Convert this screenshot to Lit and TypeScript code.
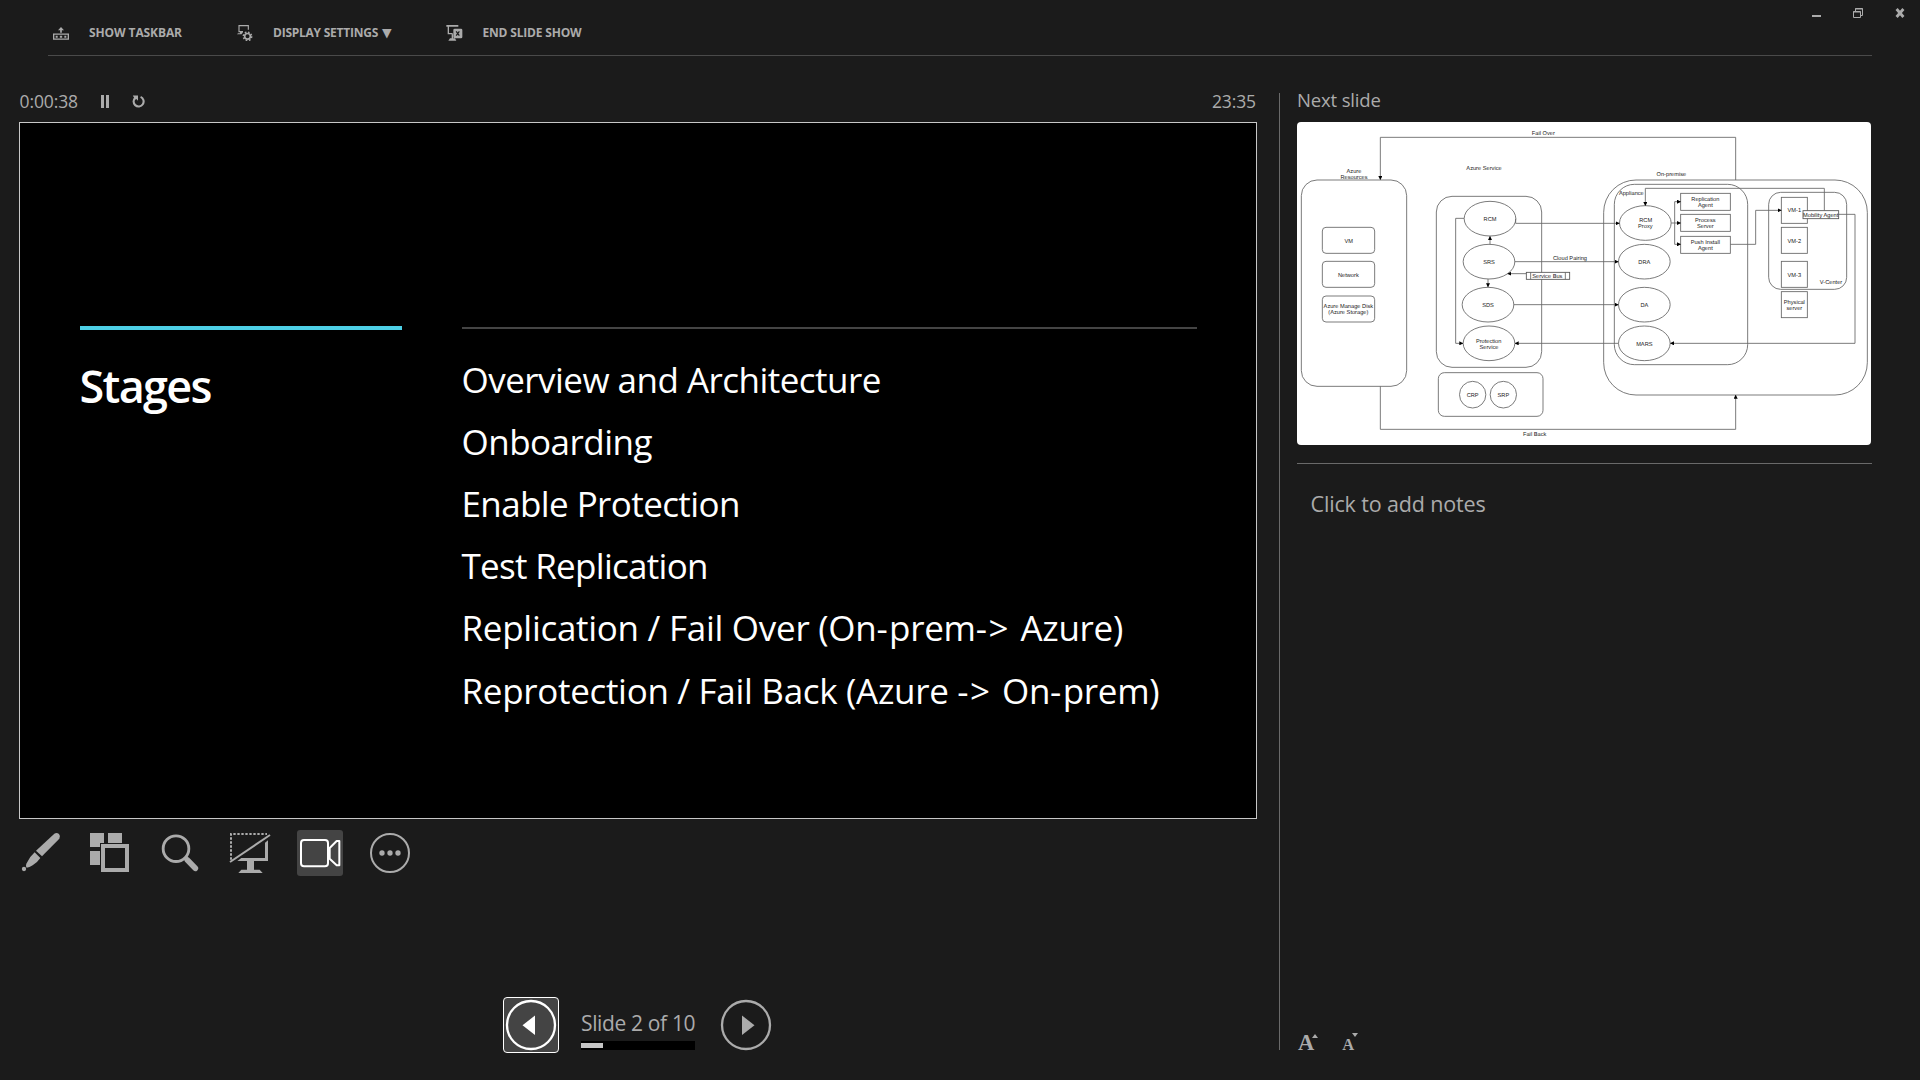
import { LitElement, html, svg, css } from "lit";
import { customElement, property } from "lit/decorators.js";
import { styleMap } from "lit/directives/style-map.js";

const AGENDA: { text: string; spacing: number }[] = [
  { text: "Overview and Architecture", spacing: -0.53 },
  { text: "Onboarding", spacing: -0.52 },
  { text: "Enable Protection", spacing: -0.6 },
  { text: "Test Replication", spacing: -0.7 },
  { text: "Replication / Fail Over (On-prem-> Azure)", spacing: -0.28 },
  { text: "Reprotection / Fail Back (Azure -> On-prem)", spacing: -0.31 },
];

/* Architecture diagram shown on the upcoming slide. */
@customElement("slide-diagram")
class SlideDiagram extends LitElement {
  static styles = css`
    :host { display: block; background: #fff; border-radius: 4px; overflow: hidden; }
    svg { display: block; width: 100%; height: 100%; }
    .shape { fill: none; stroke: #666; stroke-width: 2.6; }
    .solid { fill: #fff; stroke: #555; stroke-width: 2.6; }
    .wire { fill: none; stroke: #666; stroke-width: 2.6; }
    .head { fill: #000; }
    .label {
      font-family: "Liberation Sans", Arial, sans-serif;
      font-size: 17px;
      fill: #222;
      text-anchor: middle;
      text-rendering: geometricPrecision;
    }
  `;

  private box(x: number, y: number, w: number, h: number, r = 0) {
    return svg`<rect class="shape" x=${x} y=${y} width=${w} height=${h} rx=${r}></rect>`;
  }
  private oval(x: number, y: number, rx = 77.5, ry = 52) {
    return svg`<ellipse class="shape" cx=${x} cy=${y} rx=${rx} ry=${ry}></ellipse>`;
  }
  private label(x: number, y: number, text: string) {
    return svg`<text class="label" x=${x} y=${y + 6}>${text}</text>`;
  }
  private wire(d: string) {
    return svg`<path class="wire" marker-end="url(#head)" d=${d}></path>`;
  }

  render() {
    return html`<svg viewBox="0 0 1722 969">
      <defs>
        <marker id="head" viewBox="0 0 12 12" refX="11" refY="6" markerWidth="12" markerHeight="12"
          markerUnits="userSpaceOnUse" orient="auto">
          <path class="head" d="M0 0L12 6L0 12Z"></path>
        </marker>
      </defs>
      ${this.box(13, 174, 316, 619, 47)}
      ${this.box(76, 316, 157, 78, 11)} ${this.box(76, 418, 157, 78, 11)} ${this.box(76, 522, 157, 78, 11)}
      ${this.box(418, 223, 316, 513, 47)} ${this.box(424, 752, 314, 131, 18)}
      ${this.box(920, 174, 791, 645, 97)} ${this.box(952, 187, 400, 541, 60)}
      ${this.box(1415, 211, 234, 291, 36)}
      ${this.box(1151, 214, 149, 51)} ${this.box(1151, 277, 149, 51)} ${this.box(1151, 343, 149, 51)}
      ${this.box(1453, 226, 78, 78)} ${this.box(1453, 316, 78, 78)}
      ${this.box(1453, 418, 78, 78)} ${this.box(1453, 509, 78, 78)}
      ${this.oval(579, 290)} ${this.oval(576, 419)} ${this.oval(573, 548)} ${this.oval(576, 664)}
      ${this.oval(527, 818, 39.5, 40)} ${this.oval(619, 818, 39.5, 40)}
      ${this.oval(1045, 303)} ${this.oval(1042, 419)} ${this.oval(1042, 548)} ${this.oval(1042, 664)}

      ${this.wire("M1316 174V46H250V173")}
      ${this.wire("M250 793V922H1316V819")}
      ${this.wire("M656 290V304H967")}
      ${this.wire("M653 419H964")}
      ${this.wire("M650 548H964")}
      ${this.wire("M964 664H654")}
      ${this.wire("M501 289H476V664H498")}
      ${this.wire("M579 367V343")}
      ${this.wire("M573 471V495")}
      ${this.wire("M688 455H632")}
      ${this.wire("M1123 303H1151")}
      ${this.wire("M1133 303V239H1151")}
      ${this.wire("M1133 303V367H1151")}
      ${this.wire("M1300 367H1376V265H1453")}
      ${this.wire("M1582 266V199H1045V251")}
      ${this.wire("M1625 277H1674V664H1120")}

      <rect class="solid" x="688" y="451" width="130" height="21"></rect>
      <path class="wire" d="M701 451V472M805 451V472"></path>
      <rect class="solid" x="1518" y="266" width="107" height="24"></rect>

      ${this.label(739, 34, "Fail Over")} ${this.label(561, 137, "Azure Service")}
      ${this.label(171, 147, "Azure")} ${this.label(171, 165, "Resources")}
      ${this.label(155, 356, "VM")} ${this.label(154, 458, "Network")}
      ${this.label(154, 553, "Azure Manage Disk")} ${this.label(154, 571, "(Azure Storage)")}
      ${this.label(579, 291, "RCM")} ${this.label(576, 420, "SRS")} ${this.label(573, 549, "SDS")}
      ${this.label(575, 656, "Protection")} ${this.label(576, 674, "Service")}
      ${this.label(527, 819, "CRP")} ${this.label(619, 819, "SRP")}
      ${this.label(819, 407, "Cloud Pairing")} ${this.label(751, 462, "Service Bus")}
      ${this.label(713, 935, "Fail Back")}
      ${this.label(1123, 156, "On-premise")} ${this.label(1003, 214, "Appliance")}
      ${this.label(1046, 295, "RCM")} ${this.label(1045, 313, "Proxy")}
      ${this.label(1042, 420, "DRA")} ${this.label(1042, 549, "DA")} ${this.label(1042, 665, "MARS")}
      ${this.label(1225, 231, "Replication")} ${this.label(1225, 248, "Agent")}
      ${this.label(1225, 295, "Process")} ${this.label(1225, 313, "Server")}
      ${this.label(1225, 360, "Push Install")} ${this.label(1225, 377, "Agent")}
      ${this.label(1492, 265, "VM-1")} ${this.label(1492, 356, "VM-2")} ${this.label(1492, 459, "VM-3")}
      ${this.label(1571, 278, "Mobility Agent")} ${this.label(1602, 479, "V-Center")}
      ${this.label(1492, 540, "Physical")} ${this.label(1492, 558, "server")}
    </svg>`;
  }
}

/* Full view of the slide being presented. */
@customElement("current-slide")
class CurrentSlide extends LitElement {
  static styles = css`
    :host {
      display: grid;
      grid-template-columns: 322px 735.5px;
      column-gap: 60px;
      align-content: start;
      box-sizing: border-box;
      padding: 203px 0 0 59.5px;
      background: #000;
      border: 1px solid #c8c8c8;
      color: #fff;
      font-family: "Open Sans", "Noto Sans", sans-serif;
    }
    .accent { height: 4px; background: #4dd0e6; }
    .rule { height: 2px; margin-top: 1px; background: #444; }
    .title {
      margin: 26px 0 0;
      font-size: 45px;
      font-weight: 650;
      line-height: 60px;
      letter-spacing: -1.7px;
    }
    .items { margin: 19.6px 0 0; padding: 0; list-style: none; }
    .item { font-size: 35px; line-height: 62.2px; white-space: nowrap; }
    .dash { letter-spacing: 1.4px; }
    .angle { letter-spacing: 3.2px; }
  `;

  /* Dashes and arrow heads are set wider than the letters around them. */
  private line(text: string) {
    return text.split(/([->])/).map((part) =>
      part === "-" ? html`<span class="dash">-</span>` : part === ">" ? html`<span class="angle">&gt;</span>` : part
    );
  }

  render() {
    return html`
      <section>
        <div class="accent"></div>
        <h1 class="title">Stages</h1>
      </section>
      <section>
        <div class="rule"></div>
        <ul class="items">
          ${AGENDA.map(
            (a) => html`<li class="item" style=${styleMap({ letterSpacing: `${a.spacing}px` })}>${this.line(a.text)}</li>`
          )}
        </ul>
      </section>
    `;
  }
}

const icons = {
  taskbar: html`<svg width="16" height="13" viewBox="0 0 48 39">
    <path fill="none" stroke="currentColor" stroke-width="4" d="M2 21.5H46V36.5H2Z"></path>
    <path fill="currentColor" d="M8 26.5H14V32H8ZM20.5 26.5H27.5V32H20.5ZM34 26.5H40V32H34Z"></path>
    <path fill="currentColor" d="M24 0L33 9.5H26.5V17H21.5V9.5H15Z"></path>
  </svg>`,
  display: html`<svg width="16" height="16" viewBox="0 0 48 48">
    <path fill="none" stroke="currentColor" stroke-width="3.4" d="M18 20H6V2H34V14"></path>
    <path fill="currentColor" d="M9 21H17V25H15L14 28H0L3 25H9Z"></path>
    <circle cx="31.5" cy="34" r="8.5" fill="none" stroke="currentColor" stroke-width="5"></circle>
    <circle cx="31.5" cy="34" r="12.6" fill="none" stroke="currentColor" stroke-width="4.4" stroke-dasharray="5 4.9"></circle>
  </svg>`,
  end: html`<svg width="17" height="16" viewBox="0 0 51 48">
    <path fill="currentColor" d="M1 0H37V5H1ZM5 5H9V24H20V28H5ZM17 28H21V40H17ZM12 40H27L31 47H7Z"></path>
    <rect x="22" y="11" width="27" height="29" rx="4" fill="currentColor"></rect>
    <path fill="none" stroke="#1b1b1b" stroke-width="3.6" d="M30.500 19L40 32M40 19L30.500 32"></path>
  </svg>`,
  pen: html`<svg viewBox="0 0 138 138" fill="currentColor">
    <path d="M57 62L112 11Q119 6 126 12Q132 19 127 26L75 79Z"></path>
    <path d="M53 67L70 84Q59 100 47 106Q37 113 29 113Q25 108 28 101Q37 81 53 67Z"></path>
    <circle cx="21" cy="117" r="6.500"></circle>
  </svg>`,
  grid: html`<svg viewBox="0 0 138 138" fill="currentColor">
    <path d="M9 9H51V39H39V51H9ZM63 9H105V39H63ZM9 63H39V105H9Z"></path>
    <rect x="48" y="48" width="72" height="72" fill="none" stroke="currentColor" stroke-width="12"></rect>
  </svg>`,
  zoom: html`<svg viewBox="0 0 138 138" fill="none" stroke="currentColor">
    <circle cx="57" cy="56" r="38.500" stroke-width="8.500"></circle>
    <path d="M84 83L89 88" stroke-width="12"></path>
    <path d="M91 90L115 115" stroke-width="17" stroke-linecap="round"></path>
  </svg>`,
  screen: html`<svg viewBox="0 0 138 138" fill="currentColor">
    <path fill="none" stroke="currentColor" stroke-width="6" stroke-dasharray="7 5" d="M12 89V12H120"></path>
    <path fill="none" stroke="currentColor" stroke-width="6" d="M9 96L129 15"></path>
    <path d="M114 38L123 31V93H31L43 84H114Z"></path>
    <path d="M60 93H81V119H98L107 129H34L43 119H60Z"></path>
  </svg>`,
  camera: html`<svg viewBox="0 0 138 138" fill="none" stroke="currentColor" stroke-width="6">
    <rect x="12" y="30" width="81" height="79" rx="9"></rect>
    <path stroke-linejoin="round" d="M98 54L119 33H127V106H119L98 86Z"></path>
  </svg>`,
  more: html`<svg viewBox="0 0 138 138" fill="currentColor">
    <circle cx="69" cy="69" r="57" fill="none" stroke="currentColor" stroke-width="6"></circle>
    <circle cx="45" cy="69" r="8"></circle><circle cx="69" cy="69" r="8"></circle><circle cx="93" cy="69" r="8"></circle>
  </svg>`,
};

@customElement("app-root")
class AppRoot extends LitElement {
  static styles = css`
    :host {
      display: block;
      width: 1920px;
      height: 1080px;
      overflow: hidden;
      background: #1b1b1b;
      color: #ababab;
      font-family: "Open Sans", "Noto Sans", sans-serif;
      font-size: 12px;
    }
    svg { display: block; flex: none; }
    .header {
      display: flex;
      box-sizing: border-box;
      height: 56px;
      margin: 0 48px;
      border-bottom: 1px solid #4a4a4a;
      justify-content: space-between;
      align-items: flex-start;
    }
    .commands { display: flex; padding: 22px 0 0 5px; height: 22px; align-items: center; }
    .command { display: flex; align-items: center; font-weight: 700; white-space: nowrap; line-height: 20px; }
    .show { width: 184px; gap: 20px; letter-spacing: -0.1px; }
    .display { width: 209px; gap: 20px; letter-spacing: -0.24px; }
    .end { gap: 19.5px; letter-spacing: -0.18px; }
    .caret { margin-left: 4px; font-family: "DejaVu Sans", sans-serif; font-weight: 400; font-size: 12.5px; line-height: 12px; }
    .window { display: flex; gap: 32px; padding: 8px 0 0; margin-right: -33px; }
    .body { display: grid; grid-template-columns: 1260px 18px 575px; padding-left: 19px; }
    .divider { width: 1px; height: 957px; margin-top: 37px; background: #6a6a6a; }
    .main { display: flex; flex-direction: column; width: 1238px; }
    .status {
      display: flex;
      align-items: center;
      box-sizing: border-box;
      height: 66px;
      padding: 25px 1px 0 0.6px;
      font-size: 17.5px;
    }
    .timer { width: 81.4px; margin-top: -1.5px; letter-spacing: -0.12px; }
    .restart { margin-left: 23.4px; }
    .clock { margin: -1.5px 0 0 auto; letter-spacing: -0.1px; }
    .slide { height: 697px; }
    .tools { display: flex; gap: 24px; margin: 11px 0 0 -2px; }
    .tool { width: 46px; height: 46px; border-radius: 3px; }
    .tool svg { width: 46px; height: 46px; }
    .active { background: #444; color: #fff; }
    .nav { display: flex; margin: 121px 0 0 484px; }
    .step { box-sizing: border-box; width: 56px; height: 56px; border: 1px solid transparent; border-radius: 4px; }
    .focused { background: #444; border-color: #fff; color: #fff; }
    .position {
      width: 114px;
      margin: 0 23px 0 22px;
      padding-top: 11px;
      font-size: 21px;
      line-height: 30px;
      white-space: nowrap;
      letter-spacing: -0.36px;
    }
    .track { box-sizing: border-box; height: 9px; margin-top: 3px; padding: 2px 0; background: #000; }
    .fill { height: 5px; background: #c4c4c4; }
    .side { display: flex; flex-direction: column; }
    .next { height: 66px; box-sizing: border-box; padding-top: 31px; font-size: 18.5px; line-height: 26px; letter-spacing: -0.15px; }
    .preview { width: 574px; height: 323px; }
    .notes {
      height: 543px;
      margin-top: 18px;
      border-top: 1px solid #6a6a6a;
      padding: 24px 13.5px 0;
      font-size: 21.5px;
      line-height: 31px;
      letter-spacing: -0.15px;
    }
    .sizes {
      display: flex;
      align-items: baseline;
      gap: 24px;
      margin-left: 1px;
      font-family: "Liberation Serif", serif;
      font-weight: 700;
      line-height: 24px;
    }
    .size { display: flex; align-items: flex-start; }
    .larger { font-size: 22.5px; }
    .smaller { font-size: 16.5px; }
    .mark { margin-left: -2px; }
  `;

  @property({ type: Number }) current = 2;
  @property({ type: Number }) total = 10;

  render() {
    return html`
      <header class="header">
        <div class="commands">
          <div class="command show">${icons.taskbar}<span>SHOW TASKBAR</span></div>
          <div class="command display">
            ${icons.display}<span>DISPLAY SETTINGS<span class="caret">▼</span></span>
          </div>
          <div class="command end">${icons.end}<span>END SLIDE SHOW</span></div>
        </div>
        <div class="window">
          <svg width="9" height="10" viewBox="0 0 9 10"><path fill="currentColor" d="M0 7H9V9H0Z"></path></svg>
          <svg width="10" height="10" viewBox="0 0 10 10" fill="none" stroke="currentColor">
            <path d="M2.500 3V0.500H9.500V7.500H7.500M2 1H10M0 4H8"></path><path d="M0.500 3.500H7.500V9.500H0.500Z"></path>
          </svg>
          <svg width="10" height="10" viewBox="0 0 10 10"><path stroke="currentColor" stroke-width="2.800" d="M1.600 1L8.400 9M8.400 1L1.600 9"></path></svg>
        </div>
      </header>
      <main class="body">
        <section class="main">
          <div class="status">
            <span class="timer">0:00:38</span>
            <svg width="8" height="13" viewBox="0 0 8 13"><path fill="currentColor" d="M0 0H3V13H0ZM5 0H8V13H5Z"></path></svg>
            <svg class="restart" width="13" height="13" viewBox="0 0 13 13">
              <path fill="none" stroke="currentColor" stroke-width="2.100" d="M8.600 1.900A5 5 0 1 1 3.600 2.500"></path>
              <path fill="currentColor" d="M0.800 0.500H6V5.800L4.300 4.100L3 4.800L1.800 2.300Z"></path>
            </svg>
            <span class="clock">23:35</span>
          </div>
          <current-slide class="slide"></current-slide>
          <div class="tools">
            <div class="tool">${icons.pen}</div>
            <div class="tool">${icons.grid}</div>
            <div class="tool">${icons.zoom}</div>
            <div class="tool">${icons.screen}</div>
            <div class="tool active">${icons.camera}</div>
            <div class="tool">${icons.more}</div>
          </div>
          <div class="nav">
            <div class="step focused">
              <svg width="54" height="54" viewBox="0 0 54 54">
                <circle cx="27" cy="27" r="24" fill="none" stroke="currentColor" stroke-width="2.300"></circle>
                <path fill="currentColor" d="M31 17.500V37L18.500 27.200Z"></path>
              </svg>
            </div>
            <div class="position">
              Slide ${this.current} of ${this.total}
              <div class="track">
                <div class="fill" style=${styleMap({ width: `${(this.current / this.total) * 97}%` })}></div>
              </div>
            </div>
            <div class="step">
              <svg width="54" height="54" viewBox="0 0 54 54">
                <circle cx="27" cy="27" r="24" fill="none" stroke="currentColor" stroke-width="2.300"></circle>
                <path fill="currentColor" d="M23 17.500V37L35.500 27.200Z"></path>
              </svg>
            </div>
          </div>
        </section>
        <div class="divider"></div>
        <aside class="side">
          <div class="next">Next slide</div>
          <slide-diagram class="preview"></slide-diagram>
          <div class="notes">Click to add notes</div>
          <div class="sizes">
            <div class="size larger">A<svg class="mark" width="6" height="8" viewBox="0 0 6 8"><path fill="currentColor" d="M0 7L3 3L6 7Z"></path></svg></div>
            <div class="size smaller">A<svg class="mark" width="6" height="4" viewBox="0 0 6 4"><path fill="currentColor" d="M0 0H6L3 4Z"></path></svg></div>
          </div>
        </aside>
      </main>
    `;
  }
}
